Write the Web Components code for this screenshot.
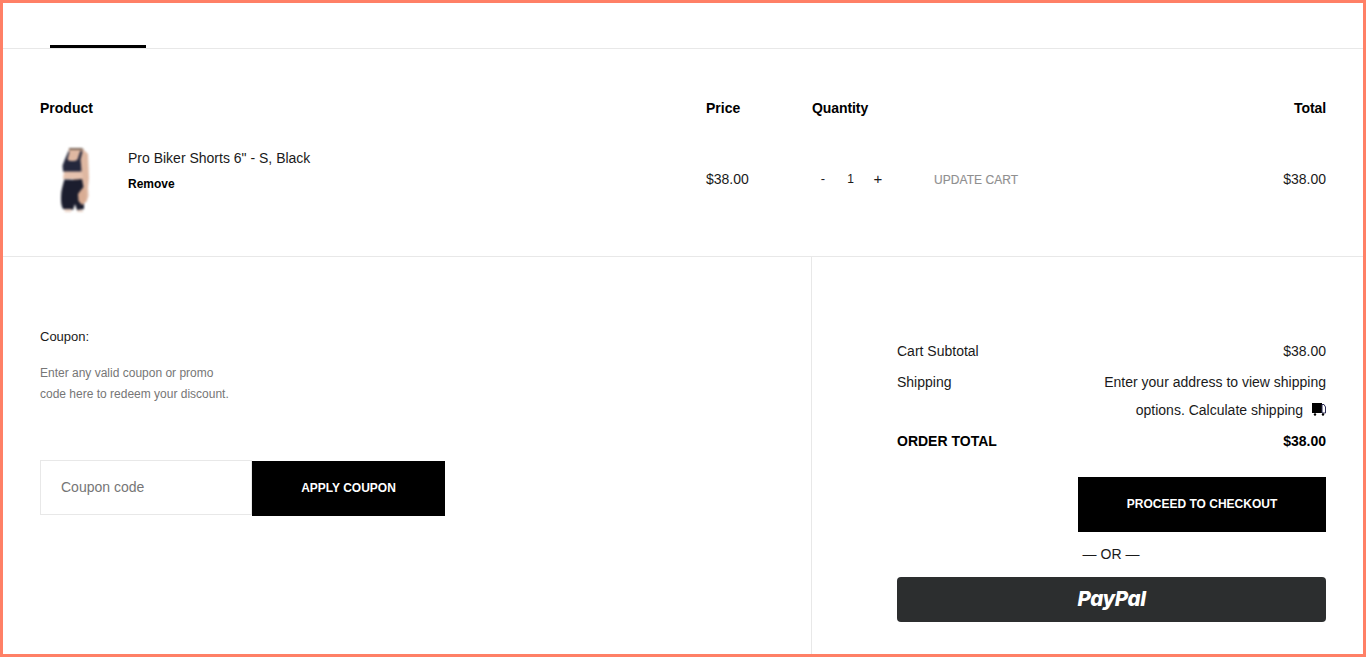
<!DOCTYPE html>
<html lang="en"><head><meta charset="utf-8"><title>Cart</title>
<style>
html,body{margin:0;height:100%;background:#fff}
body{font:14px/20px "Liberation Sans",Arial,sans-serif;color:#1a1a1a}
</style></head><body>
<cart-page></cart-page>
<template id="t-page"><style>
:host{display:flex;flex-direction:column;box-sizing:border-box;height:657px;border:3px solid #ff8066;overflow:hidden}
</style><cart-tabs></cart-tabs><cart-table></cart-table>
<div style="display:flex;flex:1;min-height:0"><coupon-panel></coupon-panel><cart-totals></cart-totals></div></template>

<template id="t-tabs"><style>
:host{display:block;height:45px;border-bottom:1px solid #e8e8e8;position:relative}
i{position:absolute;left:47px;bottom:0;width:96px;height:3px;background:#000}
</style><i></i></template>

<template id="t-table"><style>
:host{display:block;height:208px;box-sizing:border-box;border-bottom:1px solid #e8e8e8;padding:49px 37px 0}
.g{display:grid;grid-template-columns:666px 106px 1fr auto;align-items:center}
.h{font-weight:700;line-height:20px;height:20px;color:#000}
.r{margin-top:30px;grid-template-rows:62px}
.p{display:flex;align-items:center;align-self:start;height:64px}
.n{line-height:20px;margin-top:-19px}
.rm{font-size:12px;font-weight:700;line-height:20px;margin-top:6px;color:#000}
.q{display:flex;align-items:center;font-size:13px}
.q span{display:block;text-align:center}
.u{color:#8f8f8f;font-size:12px;letter-spacing:.05px;margin-left:45px;padding-top:2px;-webkit-text-stroke:.15px #8f8f8f}
.t{text-align:right}
.tight{letter-spacing:-.08px}
</style>
<div class="g h"><div>Product</div><div>Price</div><div class="tight">Quantity</div><div class="t tight">Total</div></div>
<div class="g r"><div class="p"><product-thumb></product-thumb><div><div class="n">Pro Biker Shorts 6" - S, Black</div><div class="rm">Remove</div></div></div>
<div>$38.00</div>
<div class="q"><span style="width:22px">-</span><span style="width:33px;font-size:12px">1</span><span style="width:22px;font-size:15px">+</span><span class="u">UPDATE CART</span></div>
<div class="t">$38.00</div></div></template>

<template id="t-thumb"><style>
:host{display:block;width:34px;height:64px;margin:0 37px 0 17px;flex:none}
svg{display:block;width:34px;height:64px;filter:blur(.8px);overflow:hidden}
</style><svg viewBox="0 0 34 64">
<path d="M12 1h13l3 2 3 3 .5 12 .5 12-1 10 .5 8-2 6-5 1-4-14L9 14z" fill="#dfb8a2"/>
<path d="M12 0h13l2 2H12z" fill="#7a6355"/>
<path d="M7 23h18l1 8H6z" fill="#e6c2ae"/>
<path d="M8 11l3.500-8 1 .5-2 8c2 2 8 2 10 0l3-9 2 1-2 8 .5 5 .5 7H6l-.5-6z" fill="#24273c"/>
<path d="M7 31c6 1 12 1 18 0l1.500 8 .5 10 0 12-7 1-2-6-2 6-10-1c-2-4-2-7-2-12 0-7 2-12 3.500-18z" fill="#1b1d2e"/>
<path d="M24 42l2.500-3 2 3 .5 8-1 5-3 2-3.500-4-.5-7z" fill="#d9ad94"/>
<path d="M7 61h8l-1 3H8zM20 62h6v2h-6z" fill="#ead3c6"/>
</svg></template>

<template id="t-coupon"><style>
:host{display:block;width:809px;box-sizing:border-box;border-right:1px solid #e8e8e8;padding:70px 0 0 37px}
.l{font-size:13px;line-height:20px}
.d{font-size:12px;line-height:21px;color:#767676;margin-top:16px}
.f{display:flex;margin-top:55px;height:56px}
.i{box-sizing:border-box;width:212px;height:55px;border:1px solid #e8e8e8;padding-left:20px;line-height:53px;color:#767676}
.b{width:193px;height:55px;margin-top:1px;background:#000;color:#fff;font-weight:700;font-size:12px;line-height:54px;text-align:center}
</style><div class="l">Coupon:</div><div class="d">Enter any valid coupon or promo<br>code here to redeem your discount.</div>
<div class="f"><div class="i">Coupon code</div><div class="b">APPLY COUPON</div></div></template>

<template id="t-totals"><style>
:host{display:block;flex:1;padding:84px 37px 0 85px}
.r{display:flex;justify-content:space-between;line-height:20px}
.s{margin-top:11px;line-height:28px;align-items:flex-start}
.a{text-align:right;line-height:28px}
.s>div:first-child{line-height:20px}
.s .a{margin-top:-4px}
.o{font-weight:700;margin-top:7px;color:#000}
svg{display:inline-block;width:14px;height:13px;vertical-align:-1px;margin-left:5px}
.c{display:block;margin:26px 0 0 auto;width:248px;height:55px;background:#000;color:#fff;font-weight:700;font-size:12px;line-height:54px;text-align:center}
.or{text-align:center;line-height:20px;margin-top:12px;padding-right:1px}
.pp{margin-top:13px;height:45px;background:#2c2e2f;border-radius:4px;display:flex;align-items:center;justify-content:center;color:#fff;font:italic 800 20.5px/1 Inter,"Open Sans",sans-serif;letter-spacing:-.4px}
</style>
<div class="r"><span>Cart Subtotal</span><span>$38.00</span></div>
<div class="r s"><div>Shipping</div><div class="a">Enter your address to view shipping<br>options. Calculate shipping <svg viewBox="0 0 14 13"><path d="M0 0h10v10H0z" fill="#000"/><path d="M10 1.500h2l1.500 2.500v6H10z" fill="#fff" stroke="#2b2b55" stroke-width="1"/><circle cx="3" cy="11.500" r="1.200"/><circle cx="11" cy="11.500" r="1.200"/></svg></div></div>
<div class="r o"><span>ORDER TOTAL</span><span>$38.00</span></div>
<div class="c">PROCEED TO CHECKOUT</div>
<div class="or">— OR —</div>
<div class="pp">PayPal</div></template>

<script>
const def=(n,t)=>customElements.define(n,class extends HTMLElement{constructor(){super();this.attachShadow({mode:'open'}).append(document.getElementById(t).content.cloneNode(true))}});
def('product-thumb','t-thumb');def('cart-tabs','t-tabs');def('cart-table','t-table');def('coupon-panel','t-coupon');def('cart-totals','t-totals');def('cart-page','t-page');
</script></body></html>
